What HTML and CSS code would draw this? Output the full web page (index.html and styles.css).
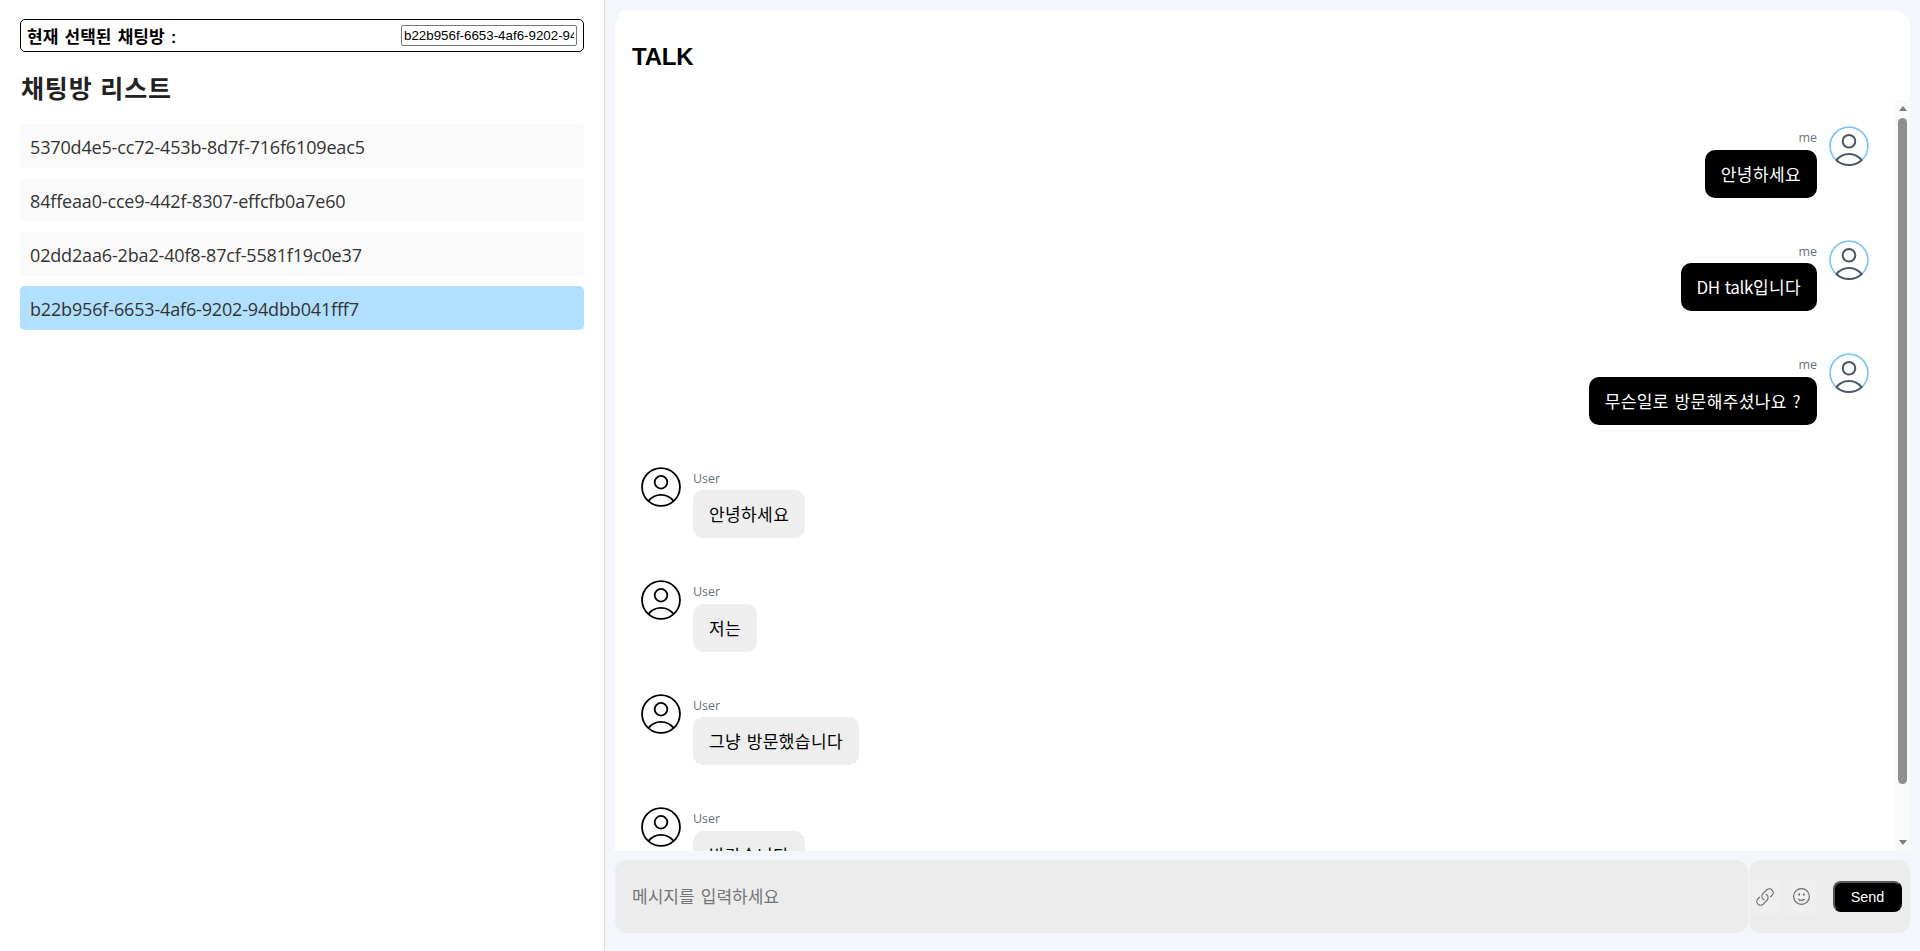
FILE: index.html
```html
<!DOCTYPE html>
<html lang="ko">
<head>
<meta charset="utf-8">
<title>DH talk</title>
<link rel="stylesheet" href="styles.css">
</head>
<body>
<div class="app">
  <aside class="sidebar">
    <div class="current">
      <span class="current-label">현재 선택된 채팅방 :</span>
      <input class="current-input" type="text" value="b22b956f-6653-4af6-9202-94dbb041fff7">
    </div>
    <h2 class="rooms-title">채팅방 리스트</h2>
    <ul class="rooms">
      <li class="room">5370d4e5-cc72-453b-8d7f-716f6109eac5</li>
      <li class="room">84ffeaa0-cce9-442f-8307-effcfb0a7e60</li>
      <li class="room">02dd2aa6-2ba2-40f8-87cf-5581f19c0e37</li>
      <li class="room room-active">b22b956f-6653-4af6-9202-94dbb041fff7</li>
    </ul>
  </aside>
  <main class="chat">
    <section class="panel">
      <h1 class="panel-title">TALK</h1>
      <div class="thread">
        <div class="messages">
          <div class="msg msg-me">
            <div class="msg-body"><div class="msg-name">me</div><div class="bubble bubble-me">안녕하세요</div></div>
            <svg class="avatar" viewBox="2.5 2.5 19 19" fill="none"><path class="ring-me" d="M17.982 18.725a9 9 0 10-11.963 0"/><path class="face-me" d="M17.982 18.725A7.488 7.488 0 0012 15.75a7.488 7.488 0 00-5.982 2.975M17.982 18.725A8.966 8.966 0 0112 21a8.966 8.966 0 01-5.982-2.275M15 9.75a3 3 0 11-6 0 3 3 0 016 0z"/></svg>
          </div>
          <div class="msg msg-me">
            <div class="msg-body"><div class="msg-name">me</div><div class="bubble bubble-me"><span class="latin">DH talk</span>입니다</div></div>
            <svg class="avatar" viewBox="2.5 2.5 19 19" fill="none"><path class="ring-me" d="M17.982 18.725a9 9 0 10-11.963 0"/><path class="face-me" d="M17.982 18.725A7.488 7.488 0 0012 15.75a7.488 7.488 0 00-5.982 2.975M17.982 18.725A8.966 8.966 0 0112 21a8.966 8.966 0 01-5.982-2.275M15 9.75a3 3 0 11-6 0 3 3 0 016 0z"/></svg>
          </div>
          <div class="msg msg-me">
            <div class="msg-body"><div class="msg-name">me</div><div class="bubble bubble-me">무슨일로 방문해주셨나요 ?</div></div>
            <svg class="avatar" viewBox="2.5 2.5 19 19" fill="none"><path class="ring-me" d="M17.982 18.725a9 9 0 10-11.963 0"/><path class="face-me" d="M17.982 18.725A7.488 7.488 0 0012 15.75a7.488 7.488 0 00-5.982 2.975M17.982 18.725A8.966 8.966 0 0112 21a8.966 8.966 0 01-5.982-2.275M15 9.75a3 3 0 11-6 0 3 3 0 016 0z"/></svg>
          </div>
          <div class="msg">
            <svg class="avatar" viewBox="2.5 2.5 19 19" fill="none"><path class="face-user" d="M17.982 18.725A7.488 7.488 0 0012 15.75a7.488 7.488 0 00-5.982 2.975m11.964 0a9 9 0 10-11.963 0m11.963 0A8.966 8.966 0 0112 21a8.966 8.966 0 01-5.982-2.275M15 9.75a3 3 0 11-6 0 3 3 0 016 0z"/></svg>
            <div class="msg-body"><div class="msg-name">User</div><div class="bubble">안녕하세요</div></div>
          </div>
          <div class="msg">
            <svg class="avatar" viewBox="2.5 2.5 19 19" fill="none"><path class="face-user" d="M17.982 18.725A7.488 7.488 0 0012 15.75a7.488 7.488 0 00-5.982 2.975m11.964 0a9 9 0 10-11.963 0m11.963 0A8.966 8.966 0 0112 21a8.966 8.966 0 01-5.982-2.275M15 9.75a3 3 0 11-6 0 3 3 0 016 0z"/></svg>
            <div class="msg-body"><div class="msg-name">User</div><div class="bubble">저는</div></div>
          </div>
          <div class="msg">
            <svg class="avatar" viewBox="2.5 2.5 19 19" fill="none"><path class="face-user" d="M17.982 18.725A7.488 7.488 0 0012 15.75a7.488 7.488 0 00-5.982 2.975m11.964 0a9 9 0 10-11.963 0m11.963 0A8.966 8.966 0 0112 21a8.966 8.966 0 01-5.982-2.275M15 9.75a3 3 0 11-6 0 3 3 0 016 0z"/></svg>
            <div class="msg-body"><div class="msg-name">User</div><div class="bubble">그냥 방문했습니다</div></div>
          </div>
          <div class="msg">
            <svg class="avatar" viewBox="2.5 2.5 19 19" fill="none"><path class="face-user" d="M17.982 18.725A7.488 7.488 0 0012 15.75a7.488 7.488 0 00-5.982 2.975m11.964 0a9 9 0 10-11.963 0m11.963 0A8.966 8.966 0 0112 21a8.966 8.966 0 01-5.982-2.275M15 9.75a3 3 0 11-6 0 3 3 0 016 0z"/></svg>
            <div class="msg-body"><div class="msg-name">User</div><div class="bubble">반갑습니다</div></div>
          </div>
        </div>
        <div class="scrollbar" aria-hidden="true">
          <div class="scroll-btn"><span class="arrow-up"></span></div>
          <div class="scroll-track"><div class="scroll-thumb"></div></div>
          <div class="scroll-btn"><span class="arrow-down"></span></div>
        </div>
      </div>
    </section>
    <form class="composer">
      <input class="composer-input" type="text" placeholder="메시지를 입력하세요">
      <div class="composer-actions">
        <button class="icon-btn" type="button" aria-label="link">
          <svg class="icon icon-link" viewBox="0 0 24 24" fill="none"><path d="M13.19 8.688a4.5 4.5 0 011.242 7.244l-4.5 4.5a4.5 4.5 0 01-6.364-6.364l1.757-1.757m13.35-.622l1.757-1.757a4.5 4.5 0 00-6.364-6.364l-4.5 4.5a4.5 4.5 0 001.242 7.244"/></svg>
        </button>
        <button class="icon-btn" type="button" aria-label="emoji">
          <svg class="icon" viewBox="0 0 24 24" fill="none"><path d="M15.182 15.182a4.5 4.5 0 01-6.364 0M21 12a9 9 0 11-18 0 9 9 0 0118 0zM9.75 9.75c0 .414-.168.75-.375.75S9 10.164 9 9.75 9.168 9 9.375 9s.375.336.375.75zm-.375 0h.008v.015h-.008V9.75zm5.625 0c0 .414-.168.75-.375.75s-.375-.336-.375-.75.168-.75.375-.75.375.336.375.75zm-.375 0h.008v.015h-.008V9.75z"/></svg>
        </button>
        <button class="send" type="button">Send</button>
      </div>
    </form>
  </main>
</div>
</body>
</html>
```

FILE: styles.css
```css
* { box-sizing: border-box; }
html, body { margin: 0; height: 100%; overflow: hidden; }
body {
  font-family: "Open Sans", "Noto Sans CJK KR", sans-serif;
  background: #f3f6fb;
  color: #000;
}
.app { display: flex; height: 951px; }

.sidebar {
  width: 605px;
  flex: none;
  background: #fff;
  border-right: 1px solid #dcdcdc;
  padding: 19px 20px 0;
}
.current {
  height: 33px;
  border: 1px solid #000;
  border-radius: 5px;
  display: flex;
  align-items: center;
  justify-content: space-between;
  padding: 0 6px;
}
.current-label {
  font: 700 17px "Liberation Sans", "Noto Sans CJK KR", sans-serif;
  word-spacing: 1.5px;
}
.current-input {
  width: 176px;
  height: 21px;
  padding: 1px 2px;
  border: 1px solid #767676;
  border-radius: 2px;
  font: 13.33px "Liberation Sans", sans-serif;
  color: #000;
  background: #fff;
}
.rooms-title {
  margin: 20px 0 0 1px;
  height: 34px;
  font: 700 25px/34px "Liberation Sans", "Noto Sans CJK KR", sans-serif;
  letter-spacing: .85px;
  color: #222;
}
.rooms {
  list-style: none;
  margin: 18px 0 0;
  padding: 0;
  display: flex;
  flex-direction: column;
  gap: 10px;
}
.room {
  height: 44px;
  padding: 0 10px;
  border-radius: 5px;
  background: #fafafa;
  color: #333;
  font-size: 18px;
  letter-spacing: -.16px;
  line-height: 47px;
}
.room-active { background: #b1dffe; }

.chat {
  flex: 1;
  min-width: 0;
  display: flex;
  flex-direction: column;
  padding: 10px 10px 18px;
  gap: 9px;
}
.panel {
  flex: 1;
  min-height: 0;
  background: #fff;
  border-radius: 16px 16px 0 0;
  display: flex;
  flex-direction: column;
}
.panel-title {
  margin: 0;
  height: 90px;
  padding: 32px 0 0 17px;
  font: 700 24px/30px "Liberation Sans", sans-serif;
  letter-spacing: -.2px;
  color: #000;
  flex: none;
}
.thread { flex: 1; min-height: 0; display: flex; }
.messages {
  flex: 1;
  min-width: 0;
  overflow-y: auto;
  scrollbar-width: none;
  padding: 26px 26px 6px 26px;
  display: flex;
  flex-direction: column;
  gap: 42px;
}
.scrollbar {
  width: 15px;
  flex: none;
  background: #fafafa;
  display: flex;
  flex-direction: column;
}
.scroll-btn {
  height: 17px;
  flex: none;
  display: flex;
  align-items: center;
  justify-content: center;
}
.arrow-up, .arrow-down {
  width: 0;
  height: 0;
  border-left: 4.5px solid transparent;
  border-right: 4.5px solid transparent;
}
.arrow-up { border-bottom: 5px solid #7f7f7f; }
.arrow-down { border-top: 5px solid #7f7f7f; }
.scroll-track { flex: 1; min-height: 0; padding-top: 1px; }
.scroll-thumb {
  width: 9px;
  height: 666px;
  margin: 0 auto;
  background: #8f8f8f;
  border-radius: 5px;
}

.msg { display: flex; gap: 12px; flex: none; }
.msg-me { justify-content: flex-end; }
.avatar { width: 40px; height: 40px; flex: none; stroke-linecap: round; stroke-linejoin: round; }
.ring-me { stroke: #7cc4fb; stroke-width: .8; }
.face-me { stroke: #4b5563; stroke-width: .95; }
.face-user { stroke: #000; stroke-width: .85; }
.msg-body { display: flex; flex-direction: column; align-items: flex-start; }
.msg-me .msg-body { align-items: flex-end; }
.msg-name {
  height: 23.5px;
  padding-top: 3px;
  font-size: 12.5px;
  line-height: 18px;
  color: #6b7280;
}
.bubble {
  height: 48px;
  padding: 0 16px;
  border-radius: 10px;
  background: #eee;
  color: #000;
  font: 17px/48px "Noto Sans CJK KR", sans-serif;
  letter-spacing: .4px;
  word-spacing: .5px;
  white-space: nowrap;
}
.bubble-me { background: #000; color: #fff; }
.latin { letter-spacing: -.4px; }

.composer { display: flex; flex: none; height: 73px; gap: 1px; }
.composer-input {
  flex: 1;
  min-width: 0;
  border: 0;
  outline: 0;
  border-radius: 12px;
  background: #ececec;
  padding: 0 17px 2px;
  font: 17px "Noto Sans CJK KR", sans-serif;
  word-spacing: 1.5px;
  color: #000;
}
.composer-input::placeholder { color: #757575; }
.composer-actions {
  width: 161px;
  flex: none;
  background: #ececec;
  border-radius: 12px;
  display: flex;
  align-items: center;
  padding-right: 8px;
}
.icon-btn {
  width: 32px;
  height: 35px;
  margin-right: 4px;
  padding: 0;
  border: 0;
  background: #efefef;
  display: flex;
  align-items: center;
  justify-content: center;
}
.icon { width: 21px; height: 21px; stroke: #6b6b6b; stroke-width: 1.35; stroke-linecap: round; stroke-linejoin: round; }
.icon-link { width: 20px; height: 20px; }
.send {
  width: 69px;
  height: 31px;
  margin-left: auto;
  padding: 0;
  border: 2px outset #555;
  border-radius: 8px;
  background: #000;
  color: #fff;
  font: 14.4px "Liberation Sans", sans-serif;
}
```
